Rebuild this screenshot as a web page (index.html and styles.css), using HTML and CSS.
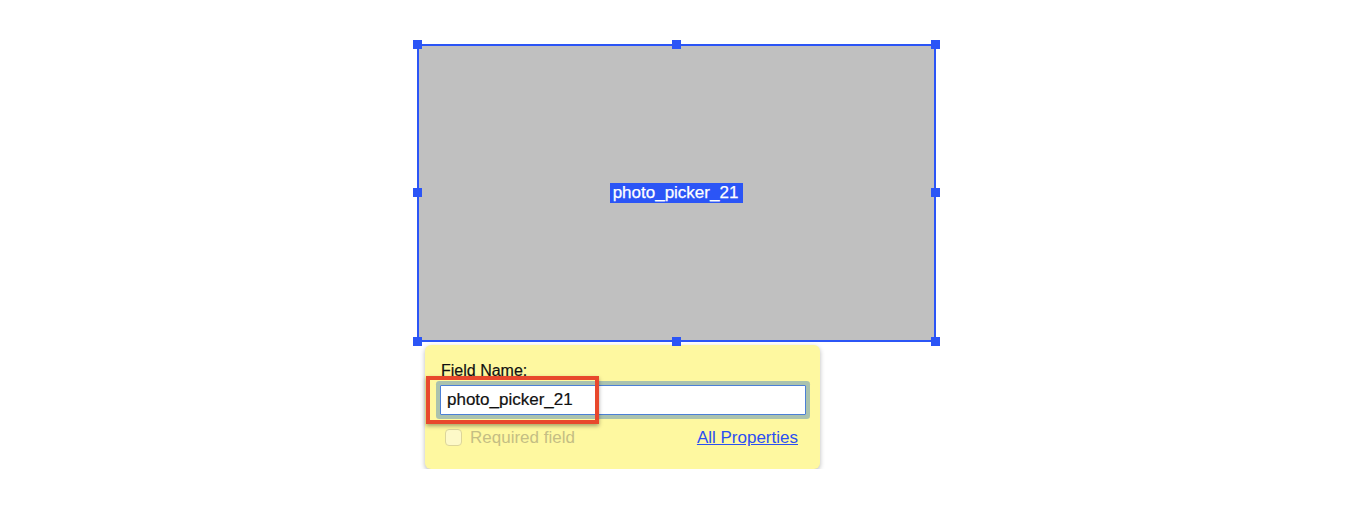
FILE: index.html
```html
<!DOCTYPE html>
<html lang="en">
<head>
<meta charset="utf-8">
<title>Photo picker field</title>
<link rel="stylesheet" href="styles.css">
</head>
<body>
<div class="stage">
  <div class="frame">
    <span class="handle h-tl"></span>
    <span class="handle h-tm"></span>
    <span class="handle h-tr"></span>
    <span class="handle h-ml"></span>
    <span class="handle h-mr"></span>
    <span class="handle h-bl"></span>
    <span class="handle h-bm"></span>
    <span class="handle h-br"></span>
    <span class="frame-label">photo_picker_21</span>
  </div>
  <div class="popover">
    <label class="field-label" for="fname">Field Name:</label>
    <div class="input-wrap">
      <input id="fname" class="field-input" type="text" value="photo_picker_21">
      <span class="annotation"></span>
    </div>
    <div class="options">
      <label class="required">
        <input class="check" type="checkbox" disabled>
        <span>Required field</span>
      </label>
      <a class="all-props" href="#">All Properties</a>
    </div>
  </div>
</div>
</body>
</html>
```

FILE: styles.css
```css
html, body {
  margin: 0;
  padding: 0;
  background: #ffffff;
}

body {
  font-family: "Liberation Sans", Arial, sans-serif;
  color: #111111;
}

.stage {
  display: flex;
  flex-direction: column;
  align-items: flex-start;
  padding: 44px 0 0 417px;
}

.frame {
  position: relative;
  box-sizing: border-box;
  width: 519px;
  height: 298px;
  border: 2px solid #2b55f6;
  background: #c0c0c0;
  display: flex;
  align-items: center;
  justify-content: center;
}

.handle {
  position: absolute;
  width: 9px;
  height: 9px;
  background: #2b55f6;
}

.h-tl { left: -6px; top: -6px; }
.h-tm { left: calc(50% - 5px); top: -6px; }
.h-tr { right: -6px; top: -6px; }
.h-ml { left: -6px; top: calc(50% - 5px); }
.h-mr { right: -6px; top: calc(50% - 5px); }
.h-bl { left: -6px; bottom: -6px; }
.h-bm { left: calc(50% - 5px); bottom: -6px; }
.h-br { right: -6px; bottom: -6px; }

.frame-label {
  display: inline-block;
  background: #2b55f6;
  color: #ffffff;
  font-size: 17px;
  line-height: 20px;
  padding: 0 5px 0 3px;
  -webkit-text-stroke: 0.25px #ffffff;
}

.popover {
  box-sizing: border-box;
  width: 395px;
  margin: 3px 0 0 8px;
  padding: 17px 14px 23px 15px;
  background: #fef8a0;
  border-radius: 6px;
  box-shadow: 0 2px 5px rgba(0, 0, 0, 0.28);
  display: flex;
  flex-direction: column;
}

.field-label {
  display: block;
  font-size: 16px;
  line-height: 18px;
  padding-left: 1px;
  color: #111111;
  -webkit-text-stroke: 0.2px #111111;
}

.input-wrap {
  position: relative;
  margin-top: 5px;
}

.field-input {
  display: block;
  box-sizing: border-box;
  width: 366px;
  height: 30px;
  margin: 0;
  padding: 0 6px;
  border: 1px solid #4b7fd6;
  border-radius: 1px;
  background: #ffffff;
  font-family: "Liberation Sans", Arial, sans-serif;
  font-size: 17px;
  color: #111111;
  outline: none;
  box-shadow: 0 0 0 4px rgba(100, 150, 185, 0.55);
  -webkit-text-stroke: 0.2px #111111;
}

.annotation {
  position: absolute;
  left: -14px;
  top: -9px;
  width: 173px;
  height: 48px;
  box-sizing: border-box;
  border: 4px solid #e8482c;
  box-shadow: 0 2px 4px rgba(0, 0, 0, 0.35);
  pointer-events: none;
}

.options {
  margin-top: 14px;
  padding: 0 8px 0 5px;
  display: flex;
  justify-content: space-between;
  align-items: center;
  height: 17px;
}

.required {
  display: flex;
  align-items: center;
  gap: 8px;
  font-size: 17px;
  line-height: 17px;
  color: #c4be84;
}

.check {
  appearance: none;
  -webkit-appearance: none;
  margin: 0;
  width: 17px;
  height: 17px;
  box-sizing: border-box;
  border: 1px solid #dcd59a;
  border-radius: 4px;
  background: #fdf9c8;
}

.all-props {
  font-size: 17px;
  line-height: 17px;
  color: #2b4ff2;
  text-decoration: underline;
}
```
